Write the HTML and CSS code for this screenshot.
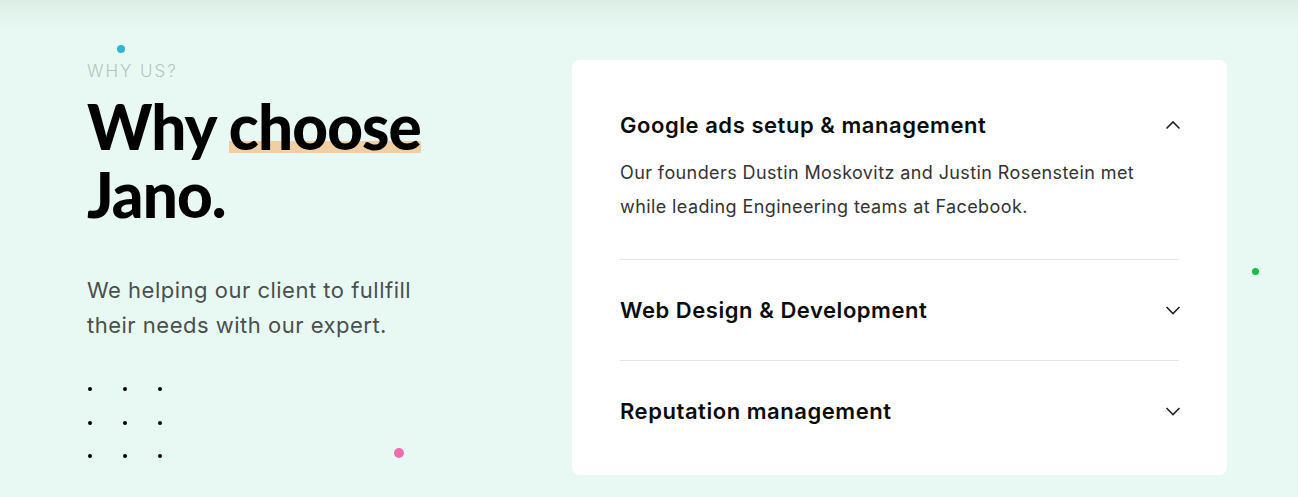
FILE: index.html
```html
<!DOCTYPE html>
<html>
<head>
<meta charset="utf-8">
<link rel="stylesheet" href="styles.css">
</head>
<body>
<section class="why">
  <span class="deco deco-blue"></span>
  <span class="deco deco-pink"></span>
  <span class="deco deco-green"></span>
  <div class="intro">
    <p class="eyebrow">WHY US?</p>
    <h1 class="title">Why <span class="mark">choose</span><br>Jano.</h1>
    <p class="lead">We helping our client to fullfill<br>their needs with our expert.</p>
    <div class="dots">
      <i></i><i></i><i></i><i></i><i></i><i></i><i></i><i></i><i></i>
    </div>
  </div>
  <div class="card">
    <div class="item open">
      <div class="item-head">
        <h3>Google ads setup &amp; management</h3>
        <svg class="chev" width="16" height="10" viewBox="0 0 16 10"><path d="M1.5 8.5 L8 2 L14.5 8.5" fill="none" stroke="#222" stroke-width="1.6"/></svg>
      </div>
      <p class="answer">Our founders Dustin Moskovitz and Justin Rosenstein met<br>while leading Engineering teams at Facebook.</p>
    </div>
    <div class="item">
      <div class="item-head">
        <h3>Web Design &amp; Development</h3>
        <svg class="chev" width="16" height="10" viewBox="0 0 16 10"><path d="M1.5 2 L8 8.5 L14.5 2" fill="none" stroke="#222" stroke-width="1.6"/></svg>
      </div>
    </div>
    <div class="item">
      <div class="item-head">
        <h3>Reputation management</h3>
        <svg class="chev" width="16" height="10" viewBox="0 0 16 10"><path d="M1.5 2 L8 8.5 L14.5 2" fill="none" stroke="#222" stroke-width="1.6"/></svg>
      </div>
    </div>
  </div>
</section>
</body>
</html>
```

FILE: styles.css
```css
* { box-sizing: border-box; }
html, body { margin: 0; padding: 0; }
body {
  background: #e8f9f3;
  font-family: "Inter", "Lato", sans-serif;
  color: #000;
  height: 497px;
  overflow: hidden;
}
.why {
  position: relative;
  display: flex;
  align-items: flex-start;
  padding: 60px 0 0 87px;
  height: 497px;
  background: linear-gradient(to bottom, #dcede6 0px, #e3f4ee 14px, #e8f9f3 34px);
}
.intro {
  width: 485px;
  flex: none;
}
.eyebrow {
  margin: 0;
  font-size: 17px;
  line-height: 22px;
  letter-spacing: 2px;
  color: #b5c4c0;
  font-weight: 300;
}
.title {
  margin: 10px 0 0;
  font-family: "Lato", sans-serif;
  font-size: 62px;
  line-height: 68px;
  font-weight: 900;
  letter-spacing: -0.9px;
}
.mark {
  background: linear-gradient(to bottom, transparent 0, transparent 38px, #f2cfa3 38px, #f2cfa3 50px, transparent 50px);
  background-position: 0 14px;
}
.lead {
  margin: 45px 0 0;
  font-size: 22px;
  line-height: 35px;
  letter-spacing: 0.5px;
  color: #4b4f4e;
  font-weight: 400;
}
.dots {
  margin-top: 44px;
  display: grid;
  grid-template-columns: repeat(3, 4px);
  grid-auto-rows: 4px;
  column-gap: 31px;
  row-gap: 29.5px;
  padding-left: 1px;
}
.dots i {
  display: block;
  width: 4px;
  height: 4px;
  border-radius: 50%;
  background: #000;
}
.card {
  width: 655px;
  flex: none;
  background: #fff;
  border-radius: 8px;
  padding: 14px 48px 14px;
}
.item {
  padding: 35px 0 35px;
  border-bottom: 1px solid #e6e6e6;
}
.item.open { padding-top: 36px; padding-bottom: 35px; }
.item:last-child { border-bottom: 0; }
.item-head {
  display: flex;
  align-items: center;
  justify-content: space-between;
}
.item-head h3 {
  margin: 0;
  font-size: 22px;
  line-height: 30px;
  font-weight: 600;
  letter-spacing: 0.55px;
  color: #0c0c0c;
}
.chev { margin-right: -2px; }
.answer {
  margin: 16px 0 0;
  font-size: 18px;
  line-height: 34px;
  letter-spacing: 0.4px;
  color: #333;
  font-weight: 400;
}
.deco {
  position: absolute;
  border-radius: 50%;
}
.deco-blue { left: 117px; top: 45px; width: 8px; height: 8px; background: #2bb8d6; }
.deco-pink { left: 394px; top: 448px; width: 10px; height: 10px; background: #f06eae; }
.deco-green { left: 1252px; top: 268px; width: 7px; height: 7px; background: #1dba48; }
```
